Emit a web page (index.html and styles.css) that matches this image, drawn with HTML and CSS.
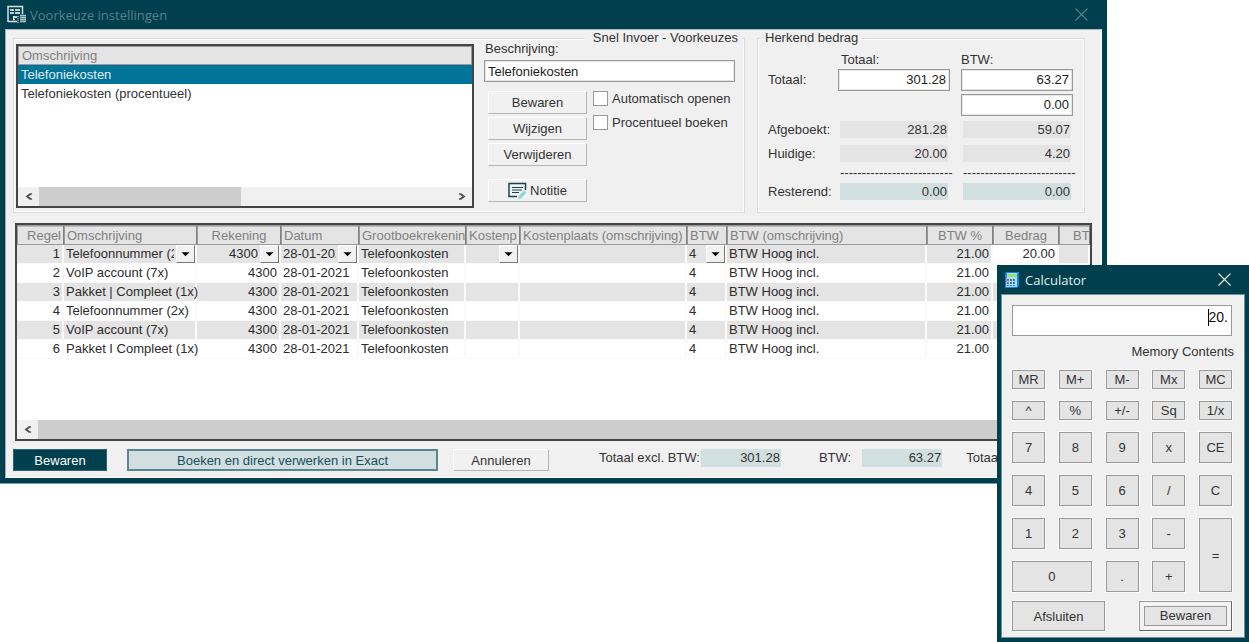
FILE: index.html
```html
<!DOCTYPE html>
<html lang="nl">
<head>
<meta charset="utf-8">
<title>Voorkeuze instellingen</title>
<link rel="stylesheet" href="styles.css">
</head>
<body>
<svg class="defs" aria-hidden="true">
  <symbol id="arrow" viewBox="0 0 19 18"><path d="M5 7h9l-4.500 4.500z" fill="#000"/></symbol>
  <symbol id="left" viewBox="0 0 8 8"><path d="M7 1L2.500 4L7 7M5.500 1L1.500 4L5.500 7" fill="none" stroke="#505050" stroke-width="1.200"/></symbol>
  <symbol id="close" viewBox="0 0 13 13"><path d="M.5.5l12 12M12.500.5l-12 12" fill="none" stroke="currentColor" stroke-width="1.100"/></symbol>
</svg>
<main class="desktop">
  <section class="window">
    <header class="titlebar">
      <svg class="app-icon" viewBox="0 0 20 19"><path d="M1 17V1.500h14.500V9M1 16.500h9" fill="none" stroke="#d5e2e5" stroke-width="1.500"/><path d="M3 5h4M8 5h5M3 8h4M8 8h5M6 12h4M6 14.500h2" stroke="#fff" stroke-width="1.300"/><path d="M6.500 11v4" stroke="#dfe9eb"/><path d="M10 11.500h2M10 13.500h2M10 15.500h2M10 17.500h2" stroke="#8fa9b0" stroke-width="1.200"/><path d="M13 10.500h6M13 12.500h6M13 14.500h6M13 16.500h6" stroke="#b3c7cc" stroke-width="1.300"/></svg>
      <h1>Voorkeuze instellingen</h1>
      <button class="close" aria-label="Sluiten"><svg><use href="#close"/></svg></button>
    </header>
    <div class="body">
      <div class="groups">
        <fieldset class="presets">
          <legend>Snel Invoer - Voorkeuzes</legend>
          <div class="list">
            <table class="preset-table">
              <thead><tr><th>Omschrijving</th></tr></thead>
              <tbody><tr class="selected"><td>Telefoniekosten</td></tr><tr><td>Telefoniekosten (procentueel)</td></tr></tbody>
            </table>
            <div class="scroll"><button aria-label="Naar links"><svg><use href="#left"/></svg></button><span class="track"><span class="thumb"></span></span><button class="right" aria-label="Naar rechts"><svg><use href="#left"/></svg></button></div>
          </div>
          <div class="edit">
            <label for="desc">Beschrijving:</label>
            <input id="desc" class="field" type="text" value="Telefoniekosten">
            <div class="actions">
              <div class="buttons">
                <button class="btn">Bewaren</button>
                <button class="btn">Wijzigen</button>
                <button class="btn">Verwijderen</button>
                <button class="btn note"><svg viewBox="0 0 19 18"><path d="M9 14.500H1V1.500h16.500V8" fill="none" stroke="#174653" stroke-width="1.500"/><path d="M4 5.500h11M4 8h10M4 10.500h7" stroke="#174653" stroke-width="1.200"/><path d="M10 17.500l1-4 5.500-5 2 2-5 5.500z" fill="#8fd6d6"/></svg>Notitie</button>
              </div>
              <div class="checks">
                <label><input type="checkbox">Automatisch openen</label>
                <label><input type="checkbox">Procentueel boeken</label>
              </div>
            </div>
          </div>
        </fieldset>
        <fieldset class="amounts">
          <legend>Herkend bedrag</legend>
          <label class="c2" for="tot">Totaal:</label><label for="btw">BTW:</label>
          <span class="c1">Totaal:</span><input id="tot" class="field num" type="text" value="301.28"><input id="btw" class="field num" type="text" value="63.27">
          <input class="field num c3in" type="text" value="0.00" aria-label="BTW 2">
          <span class="c1">Afgeboekt:</span><output>281.28</output><output>59.07</output>
          <span class="c1">Huidige:</span><output>20.00</output><output>4.20</output>
          <span class="dash d2">--------------------------</span><span class="dash">--------------------------</span>
          <span class="c1">Resterend:</span><output class="teal">0.00</output><output class="teal">0.00</output>
        </fieldset>
      </div>
      <div class="grid">
        <table class="lines">
          <colgroup><col class="w47"><col class="w133"><col class="w84"><col class="w78"><col class="w107"><col class="w53"><col class="w167"><col class="w40"><col class="w200"><col class="w66"><col class="w66"><col></colgroup>
          <thead><tr><th class="r">Regel</th><th>Omschrijving</th><th class="m">Rekening</th><th>Datum</th><th>Grootboekrekenin</th><th>Kostenp</th><th>Kostenplaats (omschrijving)</th><th>BTW</th><th>BTW (omschrijving)</th><th class="m">BTW %</th><th class="m">Bedrag</th><th class="last">BT</th></tr></thead>
          <tbody>
            <tr><td class="r">1</td>
              <td class="pick"><select aria-label="Omschrijving"><option>Telefoonnummer (2x)</option></select><svg><use href="#arrow"/></svg></td>
              <td class="pick r"><select aria-label="Rekening"><option>4300</option></select><svg><use href="#arrow"/></svg></td>
              <td class="pick"><select aria-label="Datum"><option>28-01-2021</option></select><svg><use href="#arrow"/></svg></td>
              <td>Telefoonkosten</td>
              <td class="pick"><select aria-label="Kostenplaats"><option></option></select><svg><use href="#arrow"/></svg></td><td></td>
              <td class="pick"><select aria-label="BTW"><option>4</option></select><svg><use href="#arrow"/></svg></td>
              <td>BTW Hoog incl.</td><td class="r">21.00</td><td class="r active">20.00</td><td></td></tr>
            <tr><td class="r">2</td><td>VoIP account (7x)</td><td class="r">4300</td><td>28-01-2021</td><td>Telefoonkosten</td><td></td><td></td><td>4</td><td>BTW Hoog incl.</td><td class="r">21.00</td><td></td><td></td></tr>
            <tr><td class="r">3</td><td>Pakket | Compleet (1x)</td><td class="r">4300</td><td>28-01-2021</td><td>Telefoonkosten</td><td></td><td></td><td>4</td><td>BTW Hoog incl.</td><td class="r">21.00</td><td></td><td></td></tr>
            <tr><td class="r">4</td><td>Telefoonnummer (2x)</td><td class="r">4300</td><td>28-01-2021</td><td>Telefoonkosten</td><td></td><td></td><td>4</td><td>BTW Hoog incl.</td><td class="r">21.00</td><td></td><td></td></tr>
            <tr><td class="r">5</td><td>VoIP account (7x)</td><td class="r">4300</td><td>28-01-2021</td><td>Telefoonkosten</td><td></td><td></td><td>4</td><td>BTW Hoog incl.</td><td class="r">21.00</td><td></td><td></td></tr>
            <tr><td class="r">6</td><td>Pakket I Compleet (1x)</td><td class="r">4300</td><td>28-01-2021</td><td>Telefoonkosten</td><td></td><td></td><td>4</td><td>BTW Hoog incl.</td><td class="r">21.00</td><td></td><td></td></tr>
          </tbody>
        </table>
        <div class="scroll"><button aria-label="Naar links"><svg><use href="#left"/></svg></button><span class="track"><span class="thumb full"></span></span></div>
      </div>
      <footer class="footer">
        <button class="save">Bewaren</button>
        <button class="book">Boeken en direct verwerken in Exact</button>
        <button class="btn cancel">Annuleren</button>
        <div class="totals">
          <span>Totaal excl. BTW:</span><output class="teal">301.28</output>
          <span class="gap">BTW:</span><output class="teal second">63.27</output>
          <span class="end">Totaal</span>
        </div>
      </footer>
    </div>
  </section>

  <section class="calc">
    <header class="titlebar">
      <svg class="calc-icon" viewBox="0 0 15 16"><path d="M1 0h13v14l-2 2H0V1z" fill="#1681d8"/><path d="M2 1h10v14H1z" fill="#a9dcf5"/><path d="M2 2h10v3H2z" fill="#9be06c"/><path d="M2 7h2v2H2zM2 10h2v2H2z" fill="#c8506a"/><path d="M5 7h2v2H5zM8 7h2v2H8zM5 10h2v2H5zM8 10h2v2H8zM2 13h2v1H2zM5 13h2v1H5zM8 13h2v1H8z" fill="#3279b8"/></svg>
      <h2>Calculator</h2>
      <button class="close" aria-label="Sluiten"><svg><use href="#close"/></svg></button>
    </header>
    <div class="calc-body">
      <div class="display"><span class="caret"></span><output>20.</output></div>
      <p class="memory">Memory Contents</p>
      <div class="keys">
        <button>MR</button><button>M+</button><button>M-</button><button>Mx</button><button>MC</button>
        <button>^</button><button>%</button><button>+/-</button><button>Sq</button><button>1/x</button>
        <button>7</button><button>8</button><button>9</button><button>x</button><button>CE</button>
        <button>4</button><button>5</button><button>6</button><button>/</button><button>C</button>
        <button>1</button><button>2</button><button>3</button><button>-</button><button class="tall">=</button>
        <button class="wide">0</button><button>.</button><button>+</button>
      </div>
      <div class="calc-actions"><button>Afsluiten</button><button class="default"><span>Bewaren</span></button></div>
    </div>
  </section>
</main>
</body>
</html>
```
FILE: styles.css
```css
* { box-sizing: border-box; }
body {
  margin: 0;
  background: #fff;
  color: #333;
  font: 13px/15px "Liberation Sans", Arial, sans-serif;
}
button, input, select { font: inherit; color: inherit; margin: 0; padding: 0; border-radius: 0; }
.defs { position: absolute; width: 0; height: 0; }
.desktop { position: relative; min-height: 642px; }

/* Windows */
.window { margin-right: 142px; padding: 0 5px 5px; background: #003f4d; border-bottom: 1px solid #7c9aa2; }
.titlebar { display: flex; align-items: center; height: 29px; color: #57808a; }
.titlebar h1, .titlebar h2 { flex: 1; margin: 0; font: 13px/18px "Open Sans", sans-serif; }
.app-icon { width: 20px; height: 19px; margin: 0 3px 0 2px; }
.close { width: 13px; height: 13px; border: 0; background: none; }
.close svg { display: block; width: 13px; height: 13px; }
.window .close { margin-right: 14px; }
.body { background: #f0f0f0; border: 1px solid #fff; border-top-color: #a9bbc0; border-left-color: #a9a9a9; padding: 8px 9px 6px 7px; }

/* Groups */
.groups { display: flex; gap: 12px; padding-right: 7px; }
fieldset { position: relative; margin: 0; min-width: 0; border: 1px solid #dcdcdc; box-shadow: inset 0 0 0 1px #fbfbfb; }
legend { position: absolute; top: -9px; padding: 0 4px; background: #f0f0f0; }
.presets { flex: 1; display: flex; gap: 10px; padding: 5px 9px 4px 2px; }
.presets legend { right: 2px; padding-left: 8px; }
.amounts legend { left: 3px; }

.list { flex: 1; display: flex; flex-direction: column; border: 2px solid #454545; background: #fff; }
table { width: 100%; border-collapse: separate; border-spacing: 0; table-layout: fixed; }
th { height: 19px; padding: 0 3px; font-weight: normal; text-align: left; color: #808080; background: #e4e4e4; border: 1px solid #999; white-space: nowrap; overflow: hidden; }
td { height: 19px; padding: 0 3px; white-space: nowrap; }
.selected td { background: #007399; color: #e0eef3; }
.scroll { display: flex; height: 19px; margin-top: auto; background: #f0f0f0; }
.scroll button { display: flex; align-items: center; justify-content: center; width: 21px; border: 0; background: none; }
.scroll svg { width: 8px; height: 9px; }
.scroll .right svg { transform: scaleX(-1); }
.track { flex: 1; display: flex; }
.thumb { width: 49%; background: #cdcdcd; }
.thumb.full { width: 100%; }

.edit { width: 251px; margin-top: -4px; }
.edit > label { display: block; padding: 1px; margin-bottom: 3px; }
.field { height: 22px; width: 100%; padding: 0 3px; border: 1px solid #999; outline: 0; background: #fff; color: #1c1c1c; box-shadow: inset 0 0 0 1px #e6e6e6; display: block; }
.actions { display: flex; gap: 6px; padding: 9px 0 0 4px; }
.buttons { display: flex; flex-direction: column; gap: 3px; width: 99px; }
.btn { height: 23px; border: 1px solid #fff; border-right-color: #b4b4b4; border-bottom-color: #b4b4b4; background: #f1f1f1; }
.note { display: flex; align-items: center; justify-content: center; gap: 3px; margin-top: 10px; }
.note svg { width: 19px; height: 18px; }
.checks { display: flex; flex-direction: column; gap: 9px; }
.checks label { display: flex; align-items: center; gap: 4px; height: 15px; white-space: nowrap; }
.checks input { appearance: none; width: 15px; height: 15px; border: 1px solid #999; background: #fff; }

.amounts {
  width: 328px;
  display: grid;
  grid-template-columns: 59px 112px 112px;
  grid-template-rows: 15px 25px 25px 24px 24px 14px 24px;
  column-gap: 11px;
  align-items: center;
  padding: 13px 11px 9px 10px;
}
.c2 { grid-column: 2; padding-left: 3px; }
.c1 { grid-column: 1; white-space: nowrap; }
.c3in { grid-column: 3; }
.num { text-align: right; }
output { display: block; height: 17px; line-height: 17px; padding-right: 1px; text-align: right; background: #e4e4e4; }
.amounts output { margin: 0 2px; }
.amounts .teal, .teal { background: #d2dfe1; }
.dash { padding-left: 2px; white-space: nowrap; }
.d2 { grid-column: 2; }

/* Invoice lines */
.grid { display: flex; flex-direction: column; height: 218px; margin: 10px 0 0 2px; border: 2px solid #454545; background: #fff; }
.lines th { height: 20px; padding: 0 2px; border-right: 1px solid #808080; box-shadow: inset 0 1px #bbb; }
.lines td { padding: 0 2px; border-right: 2px solid #fafafa; border-bottom: 1px solid #fafafa; line-height: 16px; color: #2c2c2c; }
.lines .last { padding-left: 13px; padding-right: 0; }
.lines .r { text-align: right; }
.lines .m { text-align: center; }
.lines tbody tr:nth-child(odd) td { background: #e4e4e4; }
.lines tbody tr td.active { background: #fff; }
.lines .pick { position: relative; padding-right: 21px; }
.pick select { display: block; appearance: none; width: 100%; height: 16px; border: 0; background: none; outline: 0; }
.pick.r select { text-align: right; }
.pick svg { position: absolute; right: 0; top: 0; width: 19px; height: 18px; background: #f1f1f1; border: 1px solid #fff; border-right-color: #777; border-bottom-color: #777; }
.w47 { width: 47px; } .w133 { width: 133px; } .w84 { width: 84px; } .w78 { width: 78px; }
.w107 { width: 107px; } .w53 { width: 54px; } .w167 { width: 167px; } .w40 { width: 40px; }
.w200 { width: 200px; } .w66 { width: 66px; }

/* Footer */
.footer { display: flex; align-items: center; padding-top: 8px; }
.footer button { height: 22px; }
.save { width: 94px; border: 1px solid #2f6470; background: #003f4d; color: #fff; }
.book { width: 311px; margin-left: 20px; border: 2px solid #5b868f; background: #d2dfe1; color: #164e5c; }
.footer .cancel { width: 96px; margin-left: 15px; }
.totals { display: flex; align-items: center; margin: -5px 0 0 50px; white-space: nowrap; }
.totals output { width: 80px; height: 18px; line-height: 18px; margin-left: 1px; }
.totals .gap { margin-left: 38px; }
.totals .second { margin-left: 11px; }
.totals .end { margin-left: 24px; }

/* Calculator */
.calc { position: absolute; top: 265px; right: 0; width: 252px; padding: 0 4px 4px; background: #003f4d; }
.calc .titlebar { color: #e6eef0; }
.calc-icon { width: 15px; height: 16px; margin: 0 5px 0 4px; }
.calc .close { margin-right: 14px; }
.calc-body { background: #f0f0f0; border: 1px solid #6f929a; padding: 10px 12px 6px 10px; }
.display { display: flex; justify-content: flex-end; height: 31px; padding: 3px 3px; border: 1px solid #999; background: #fff; color: #111; }
.display output { height: 17px; padding: 0; background: none; font-size: 14px; }
.caret { width: 1px; height: 17px; background: #000; }
.memory { margin: 8px -2px 11px; text-align: right; }
.keys { display: grid; grid-template-columns: repeat(5, 33px); grid-template-rows: 19px 19px repeat(4, 31px); row-gap: 12px; justify-content: space-between; }
.keys button, .calc-actions button { border: 1px solid #999; background: #e4e4e4; box-shadow: 0 0 0 1px #fafafa; }
.keys .tall { grid-row: 5 / 7; grid-column: 5; }
.keys .wide { grid-column: 1 / 3; }
.calc-actions { display: flex; justify-content: space-between; margin-top: 9px; }
.calc-actions button { width: 93px; height: 30px; }
.calc-actions .default { padding: 4px; background: #f4f4f4; border-right-color: #666; border-bottom-color: #666; }
.default span { display: block; border: 1px solid #999; background: #e4e4e4; line-height: 18px; }
```
